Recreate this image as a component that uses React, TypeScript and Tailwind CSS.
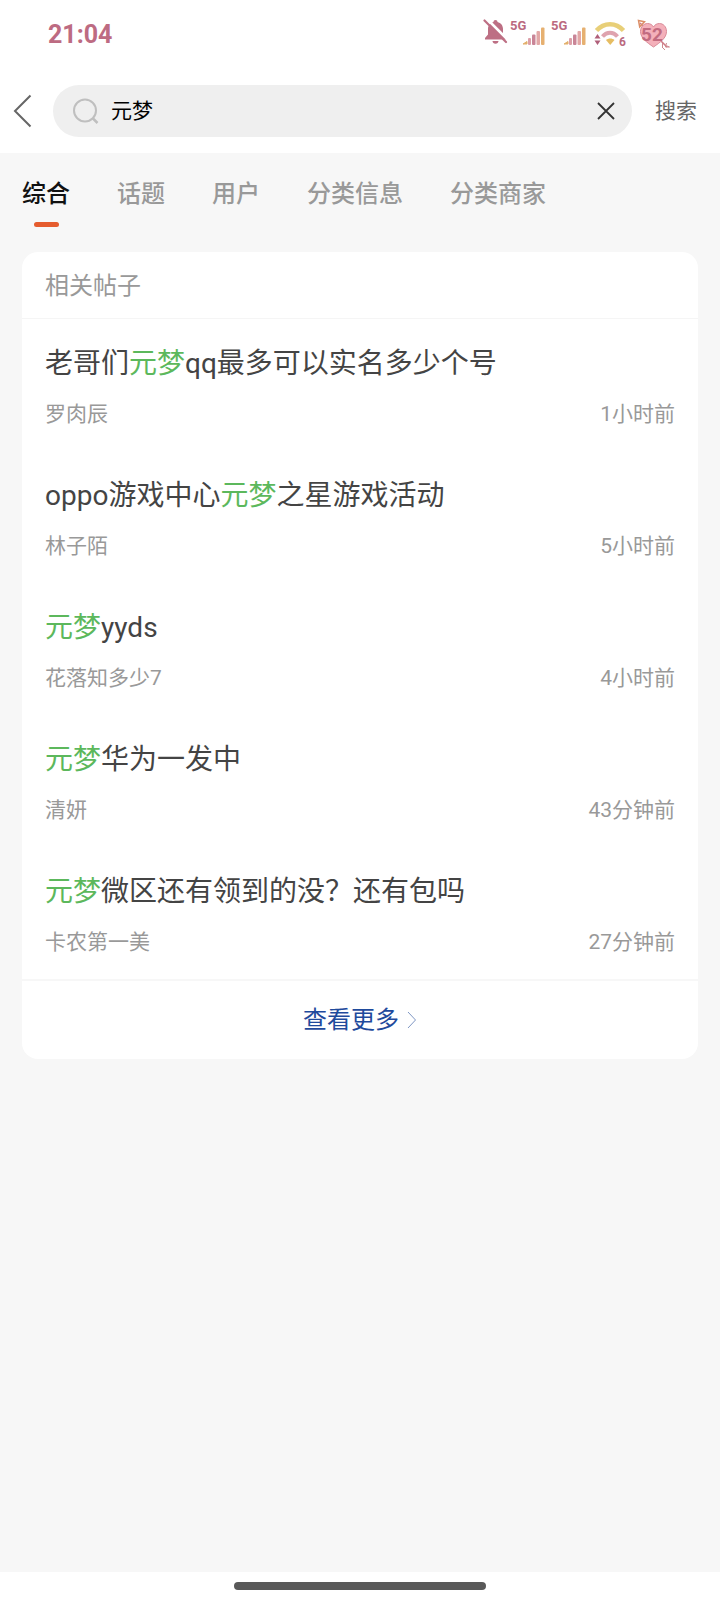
import { useState } from "react";

type Post = {
  id: number;
  // parts wrapped in [] are keyword hits
  title: string;
  author: string;
  time: string;
};

const tabs = ["综合", "话题", "用户", "分类信息", "分类商家"];

const posts: Post[] = [
  { id: 1, title: "老哥们[元梦]qq最多可以实名多少个号", author: "罗肉辰", time: "1小时前" },
  { id: 2, title: "oppo游戏中心[元梦]之星游戏活动", author: "林子陌", time: "5小时前" },
  { id: 3, title: "[元梦]yyds", author: "花落知多少7", time: "4小时前" },
  { id: 4, title: "[元梦]华为一发中", author: "清妍", time: "43分钟前" },
  { id: 5, title: "[元梦]微区还有领到的没？还有包吗", author: "卡农第一美", time: "27分钟前" },
];

function Signal() {
  return (
    <svg width="41" height="36" viewBox="0 0 41 36" aria-hidden="true">
      <text x="0" y="13" fontSize="13" fontWeight="700" fill="#bb6a80">
        5G
      </text>
      <path d="M13 27l4-2.5V27z" fill="#e3b06c" stroke="#e3b06c" strokeLinejoin="round" />
      <rect x="18" y="21" width="3" height="7" rx="1" fill="#dc9fa8" />
      <rect x="22" y="17.500" width="3.500" height="10.500" rx="1" fill="#c98597" />
      <rect x="26.500" y="14" width="3.500" height="14" rx="1" fill="#e2a7a6" />
      <rect x="31" y="10.500" width="3.500" height="17.500" rx="1" fill="#e6b070" />
    </svg>
  );
}

function StatusBar() {
  return (
    <div className="flex h-[68px] items-center justify-between pt-0.5 pr-[46px] pl-12">
      <span className="text-[25px] leading-8 font-bold text-[#bd6b82]">21:04</span>
      <div className="flex items-center">
        <svg width="27" height="36" viewBox="0 0 27 36" aria-hidden="true">
          <path
            d="M12.500 3c1.300 0 2 .8 2 1.900 3.500.8 5.500 3.600 5.500 7.100v5.500l3 3.500v1.500H2V21l3-3.500V12c0-3.500 2-6.300 5.500-7.100 0-1.100.7-1.900 2-1.900zM9.500 24h6c0 1.600-1.300 2.700-3 2.700s-3-1.100-3-2.700z"
            fill="#bd6f84"
          />
          <path d="M3.500 1.500l21 21" stroke="#fff" strokeWidth="2.500" />
          <path d="M1.500 3.500L23 25" stroke="#bd6f84" strokeWidth="2.200" strokeLinecap="round" />
        </svg>
        <Signal />
        <Signal />
        <svg width="38" height="36" viewBox="0 0 38 36" fill="none" aria-hidden="true">
          <path d="M4.500 13.500C12 5 24 5 31.500 13.500" stroke="#e8cf78" strokeWidth="4.500" />
          <path d="M10.500 19.500c4.500-5 10.500-5 15 0" stroke="#dfa3ae" strokeWidth="4" />
          <path d="M14 23c2.500-2 6-2 8.500 0L18.200 28z" fill="#e6bd62" />
          <path d="M2.500 21.500L5.500 17l3 4.500zM2.500 23.500h6L5.500 28z" fill="#b0607a" />
          <text x="27" y="29" fontSize="12" fontWeight="700" fill="#bb6a80">
            6
          </text>
        </svg>
        <svg width="44" height="36" viewBox="0 0 44 36" fill="none" aria-hidden="true">
          <path d="M10 6l4 4M31 24l6 6" stroke="#cf7a85" strokeWidth="1.500" />
          <path d="M8.500 3.500l6 1.200-4.800 5.100z" stroke="#dc8f68" strokeWidth="1.500" />
          <path
            d="M23.500 30C17 25.500 10.500 21 10.500 14.500 10.500 9.500 14 6.500 17.500 6.500c2.800 0 4.800 1.300 6 3.500 1.200-2.200 3.200-3.500 6-3.500 3.500 0 7 3 7 8C36.500 21 30 25.500 23.500 30z"
            fill="#f4b0ba"
            stroke="#d98a97"
          />
          <path d="M32.500 26v4.500M36.500 26l-1 4h4M32 30l3 3M37 29l2.500 1" stroke="#cf8a90" />
          <text x="11" y="24" fontSize="19" fontWeight="700" fill="#c26b80">
            52
          </text>
        </svg>
      </div>
    </div>
  );
}

function PostTitle({ title }: { title: string }) {
  return (
    <>
      {title.split(/(\[.*?\])/).map((part, index) =>
        part.startsWith("[") ? (
          <span key={index} className="text-[#5cb85c]">
            {part.slice(1, -1)}
          </span>
        ) : (
          part
        )
      )}
    </>
  );
}

export default function App() {
  const [activeTab, setActiveTab] = useState("综合");
  const [keyword, setKeyword] = useState("元梦");

  return (
    <div className="flex min-h-screen flex-col bg-[#f7f7f7] font-[Roboto,'Noto_Sans_CJK_SC',sans-serif]">
      <header className="bg-white">
        <StatusBar />

        <form
          className="flex h-[85px] items-center pr-[23px] pl-3"
          onSubmit={(event) => event.preventDefault()}
        >
          <button type="button" aria-label="返回" className="mr-5 shrink-0">
            <svg width="21" height="36" viewBox="0 0 21 36" fill="none">
              <path d="M18.500 2.500L3 18l15.500 15.500" stroke="#666" strokeWidth="2" />
            </svg>
          </button>

          <div className="flex h-[52px] min-w-0 flex-1 items-center rounded-full bg-[#efefef] pr-3 pl-5">
            <svg width="26" height="26" viewBox="0 0 26 26" fill="none" className="shrink-0" aria-hidden="true">
              <circle cx="12" cy="12.500" r="11" stroke="#bfbfbf" strokeWidth="2" />
              <path d="M19.500 20l5 5" stroke="#bfbfbf" strokeWidth="2.500" />
            </svg>
            <input
              type="text"
              aria-label="搜索内容"
              value={keyword}
              onChange={(event) => setKeyword(event.target.value)}
              className="ml-3 min-w-0 flex-1 bg-transparent text-[21px] leading-8 text-black outline-none"
            />
            <button type="button" aria-label="清空" className="p-1" onClick={() => setKeyword("")}>
              <svg width="20" height="20" viewBox="0 0 20 20" fill="none">
                <path d="M2 2l16 16M18 2L2 18" stroke="#333" strokeWidth="1.800" />
              </svg>
            </button>
          </div>

          <button type="submit" className="ml-[23px] shrink-0 text-[21px] leading-8 text-[#666]">
            搜索
          </button>
        </form>
      </header>

      <nav className="flex gap-[47px] px-[22px] pt-[21px]">
        {tabs.map((tab) => (
          <button
            key={tab}
            type="button"
            onClick={() => setActiveTab(tab)}
            className={`flex flex-col items-center text-2xl leading-10 font-medium ${
              activeTab === tab ? "text-[#111]" : "text-[#999]"
            }`}
          >
            {tab}
            {activeTab === tab ? (
              <span className="mt-2 h-[5px] w-[25px] rounded-full bg-[#e55c2e]" />
            ) : null}
          </button>
        ))}
      </nav>

      <main className="mx-[22px] mt-[25px] rounded-2xl bg-white">
        <h2 className="border-b border-[#f5f5f5] px-[23px] pt-[14px] pb-3 text-2xl leading-10 text-[#999]">
          相关帖子
        </h2>

        <ul>
          {posts.map((post) => (
            <li key={post.id}>
              <a href="#" className="block px-[23px] pt-[25px] pb-[23px]">
                <h3 className="text-[28px] leading-10 text-[#444]">
                  <PostTitle title={post.title} />
                </h3>
                <div className="mt-4 flex justify-between text-[21px] leading-7 text-[#999]">
                  <span>{post.author}</span>
                  <span>{post.time}</span>
                </div>
              </a>
            </li>
          ))}
        </ul>

        <a
          href="#"
          className="flex h-20 items-center justify-center gap-2 border-t-2 border-[#f7f7f7] text-2xl leading-10 text-[#1f4a9c]"
        >
          查看更多
          <svg width="10" height="18" viewBox="0 0 10 18" fill="none" aria-hidden="true">
            <path d="M1 1l7.500 8L1 17" stroke="#7f97c4" />
          </svg>
        </a>
      </main>

      <footer className="mt-auto flex h-7 justify-center bg-white pt-[10px]">
        <span className="h-2 w-[252px] rounded-full bg-[#595959]" />
      </footer>
    </div>
  );
}
